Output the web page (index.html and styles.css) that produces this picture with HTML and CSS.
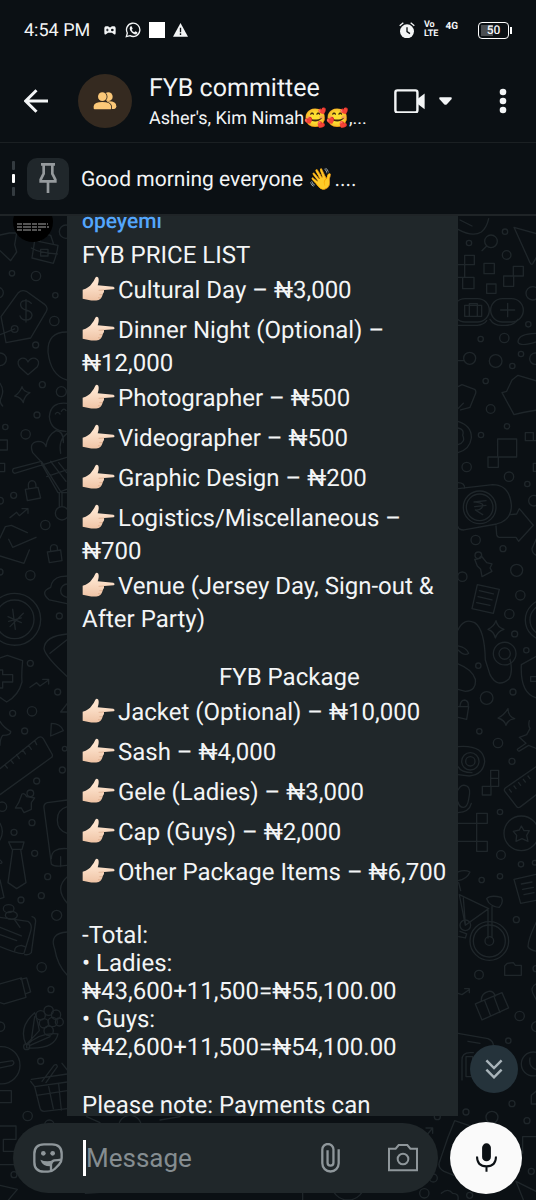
FILE: index.html
```
<!DOCTYPE html>
<html lang="en">
<head>
  <meta charset="UTF-8" />
  <meta name="viewport" content="width=device-width, initial-scale=1" />
  <title>FYB committee</title>
  <link rel="stylesheet" href="styles.css">
</head>
<body>
  <svg class="wallpaper" viewBox="0 0 536 1200" preserveAspectRatio="xMidYMin slice" aria-hidden="true">
    <!-- pointing hand, used by the list -->
    <defs>
      <linearGradient id="skin" x1="0" y1="0" x2="0" y2="1">
        <stop offset="0.3" stop-color="#fde3cd"/>
        <stop offset="1" stop-color="#efc4a6"/>
      </linearGradient>
      <symbol id="hand" viewBox="0 0 108 120">
        <path fill="url(#skin)" stroke="none" d="M2 62Q21 56 29 44 37 34 40 26 44 20 49 26 52 34 47 49L94 53Q101 57 95 61L66 63Q68 70 62 76 60 88 50 93 36 96 20 93L2 89z"/>
        <path fill="none" stroke="#d9a684" stroke-width="2" d="M66 63L50 64M62 77l-10 0M57 87l-9-1"/>
      </symbol>
    </defs>
    <!-- upper left -->
    <g transform="translate(0 220) scale(.3333)">
      <path d="M0 45l28-6 22 0-6 35 6 22-18 26-32-30M104 62l70 14q-2 22-14 54l-64-16zM94 84q22 14 78 18M122 88h22v20h-22zM120 64q6-26 32-18l8 24"/>
      <circle cx="198" cy="35" r="20"/><circle cx="36" cy="160" r="8"/><circle cx="108" cy="168" r="14"/><circle cx="166" cy="226" r="8"/>
      <circle cx="163" cy="303" r="14"/><circle cx="107" cy="375" r="9"/><circle cx="-6" cy="218" r="16"/><circle cx="0" cy="418" r="19"/>
      <path d="M18 368L3 290 55 218q10-10 24-4l56 40q10 8 4 20L92 354zM0 344l44-17"/><circle cx="44" cy="327" r="10"/>
      <path d="M94 250q-8-10-20-8-14 2-12 14 2 10 16 14 18 4 18 16-2 14-18 14-14 0-18-12M78 238v68"/>
      <path d="M200 336q-58 0-56 60 8 70 56 84M84 464l-26-24q-10-18 6-25 14-3 20 11 8-14 22-11 16 8 6 25z"/>
      <path d="M66 500q4 16 24 18-18 10-20 30-6-16-26-20 16-10 22-28z"/>
      <circle cx="127" cy="494" r="9"/><circle cx="184" cy="515" r="15"/><circle cx="111" cy="585" r="9"/><circle cx="77" cy="643" r="14"/><circle cx="16" cy="621" r="8"/>
      <path d="M0 490q14 20 4 42-8 14 4 26M202 550q-50-6-54 40 4 44 50 44M166 582q6-10 14 0M184 574q8-12 14-2"/>
      <path d="M126 728l-28-30q-12-30 16-34 20 0 24 16 4-34 30-48 24 2 22 36M182 700q-8-40 20-60"/>
      <path d="M200 712l-156 48q-10-4-4-14l84-22 60 94h16M124 730l50 88 26-10M152 724l46 60M140 770l60-20M176 728l24 30M178 818v44M186 818v40"/>
      <circle cx="186" cy="880" r="20"/><path d="M0 660h22v30H0M0 730h14v25H0M76 808l38-6 8 32-40 8zM86 804q-4-20 10-22 12 0 12 18"/>
      <circle cx="41" cy="826" r="9"/><circle cx="0" cy="842" r="10"/><circle cx="136" cy="915" r="14"/><path d="M30 893l20-16 8 10 24-20M66 866h18v14"/>
      <path d="M82 938l-48-22-18 4-16 34M26 958l12 24 70-30M88 990l-16 40-72-22"/>
      <path d="M142 996l40-6 4 32-38 6zM152 994q-4-20 10-20 12 0 10 16"/><circle cx="91" cy="1066" r="14"/><circle cx="0" cy="1056" r="9"/>
      <path d="M204 1152l-56-12q-30-24 4-38 4-26 30-32l22-2"/><circle cx="202" cy="1112" r="20"/>
      <circle cx="44" cy="1198" r="78"/><circle cx="44" cy="1198" r="58"/><path d="M38 1168l8 60M70 1180l-40 40M24 1190l40 18M26 1204l38-10"/><circle cx="178" cy="1188" r="9"/>
    </g>
    <!-- lower left -->
    <g transform="translate(0 640) scale(.3333)">
      <path d="M132 26q2-38 70-44M132 26q4 24 70 84M150 40l50-40M0 54l22-8 46 16q-4 40-2 64-10 40-46 60L0 172M0 90h8v14h30v22H8v18H0"/>
      <circle cx="91" cy="70" r="9"/><circle cx="173" cy="156" r="9"/><circle cx="96" cy="214" r="14"/><circle cx="38" cy="220" r="9"/><circle cx="74" cy="273" r="9"/>
      <path d="M90 142l20-14 10 10 26-18M128 118h18v14M154 250q28 0 36 22l-38 16zM202 190l-20 26h20M0 244q10 18 32 30 2 12-24 12-8 10-8 30"/>
      <path d="M0 386l116-94q8-4 14 4l26 46q4 8-4 12L0 464M14 374l8 10M32 360l8 10M50 344l8 12M68 330l8 12M86 316l8 12M104 302l6 12"/>
      <circle cx="187" cy="390" r="9"/><circle cx="194" cy="326" r="7"/><circle cx="110" cy="423" r="9"/><circle cx="6" cy="500" r="14"/><circle cx="96" cy="548" r="9"/><circle cx="42" cy="577" r="9"/><circle cx="104" cy="640" r="9"/><circle cx="143" cy="710" r="9"/>
      <path d="M66 462q8-4 14 8l24 4-10 14 0 20-22 10-8-14-18 0 10-16z"/><circle cx="91" cy="460" r="10"/>
      <path d="M202 480l-60 8q-12 4-10 16l22 168q8 10 46 4M202 500q-30 8-30 40t30 40M154 656q0-34 48-30M182 650v30M26 606h46l-6 22H36zM38 628h24l16 100-28 18-26-18zM0 550q14 24 0 50M0 660q12 10 0 10M0 720l12 52-12 4"/>
      <circle cx="63" cy="780" r="9"/><circle cx="124" cy="767" r="9"/><circle cx="170" cy="826" r="15"/><path d="M202 710q-40 34 0 80"/>
      <path d="M0 832l84 12q14 8 8 30l-20 66q-10 6-72-20M96 830q14 4 10 20l-12 88q-6 8-20 6M0 862l64 26M0 884l50 18M44 932q0-14 20-16l10 4"/><ellipse cx="26" cy="806" rx="16" ry="12"/><ellipse cx="34" cy="826" rx="18" ry="12"/><path d="M44 840l16 22"/>
      <circle cx="125" cy="982" r="14"/><circle cx="153" cy="1049" r="9"/><path d="M202 876q-56 4-38 50 8 50 38 80M0 1032l64-18 14 58-66 20-12-4M62 1018l18-4 12 42-16 6"/>
      <circle cx="0" cy="1160" r="14"/><circle cx="4" cy="1276" r="56"/><path d="M0 1268l38-6q8 8-2 14L0 1284"/><circle cx="122" cy="1264" r="9"/>
      <path d="M78 1214q-24-52 26-96 10 26 14 54-18 20-40 42zM80 1216q40-40 94-34-10 48-94 42zM104 1130l-10 70M150 1190l-60 26"/><circle cx="122" cy="1126" r="14"/><circle cx="146" cy="1112" r="14"/><circle cx="168" cy="1124" r="14"/><circle cx="132" cy="1150" r="14"/><circle cx="158" cy="1146" r="14"/><circle cx="178" cy="1146" r="12"/><circle cx="146" cy="1172" r="14"/><circle cx="80" cy="1220" r="9"/>
    </g>
    <!-- upper right -->
    <g transform="translate(440 220) scale(.3333)">
      <path d="M54 28q44 24 70 8 16-12 22-40M60 0l36 18M222 22l48 106q6 10 10 0l14-24M222 22l72 20"/>
      <circle cx="153" cy="64" r="19"/><path d="M140 78l-14 14"/><circle cx="195" cy="35" r="8"/><circle cx="87" cy="69" r="8"/><circle cx="200" cy="105" r="13"/><circle cx="278" cy="220" r="20"/>
      <path d="M74 106h29v28H74zM54 134h20v38H54M68 172h34v34H68zM132 130h31v31h-31zM220 139h30v29h-30zM191 168h30v31h-30zM140 192h28v28h-28z"/>
      <rect x="40" y="236" width="108" height="70" rx="35"/><rect x="152" y="236" width="98" height="70" rx="35"/><path d="M54 316h58q20-2 28-14M150 298q12 20 40 18 30 2 44-18M74 256h51v33H74zM88 289v-38h24v38M182 270h42M203 250v40"/>
      <circle cx="265" cy="313" r="8"/><circle cx="122" cy="357" r="8"/><circle cx="193" cy="354" r="14"/><circle cx="89" cy="415" r="18"/><path d="M54 422h18M294 340q-60 0-60 26 6 16 60-2"/><circle cx="167" cy="423" r="19"/><circle cx="217" cy="438" r="8"/><circle cx="243" cy="402" r="8"/><circle cx="286" cy="416" r="17"/><circle cx="137" cy="483" r="8"/>
      <path d="M54 500l12-6 38 14q6 6 2 14l-16 40-28 8M54 566l16-16M294 484l-60-18-18 14-16 34-14 4 36 66q30-8 72-14"/><circle cx="152" cy="567" r="13"/><circle cx="201" cy="619" r="8"/><circle cx="123" cy="645" r="8"/><circle cx="80" cy="741" r="14"/>
      <path d="M54 604q42 14 40 50-4 34-40 44M54 624q20 4 14 22 10 20-14 28M173 657h57v54h-57zM144 711h31v31h-31zM256 638h24v24h-24zM280 662h14M280 730h14v24h-14z"/>
      <circle cx="207" cy="770" r="14"/><circle cx="262" cy="792" r="8"/><circle cx="282" cy="842" r="16"/><path d="M54 806l104-12q50 0 56 60 2 46-44 58l-98 18q-16 0-18-10M54 788q20 0 20 16"/><circle cx="119" cy="862" r="49"/><circle cx="119" cy="862" r="40"/><path d="M102 846l36-4M104 860l34-4M108 846q28 4 18 16-6 10-20 8l22 14"/>
      <path d="M168 918l2 26q2 8 8 8h50l8 12 44-48-42-50-8 16-18 2"/><circle cx="107" cy="960" r="14"/><circle cx="189" cy="986" r="9"/><circle cx="230" cy="1051" r="18"/><circle cx="67" cy="1070" r="14"/><path d="M294 946l-18 40q0 16 18 22M104 1018q12 2 20-10l16 20 16 4-6 12 6 10-30 16-4-22-10-10z"/><circle cx="115" cy="1006" r="10"/>
      <path d="M112 1094l66 14-18 72-64-14zM118 1112l42 10M114 1130l42 10M110 1148l40 8M168 1202q4 20 24 26-20 6-26 26-4-20-22-26 18-8 24-26z"/><circle cx="241" cy="1126" r="14"/><circle cx="208" cy="1182" r="14"/><circle cx="224" cy="1242" r="9"/><circle cx="259" cy="1291" r="8"/>
      <circle cx="318" cy="1200" r="62"/><circle cx="318" cy="1200" r="48"/><circle cx="194" cy="1301" r="34"/><circle cx="194" cy="1301" r="17"/><path d="M54 1230q18-38 50-22 30 20 32 112l14 44q22 42 56 14 14-20 4-60M54 1278q24 4 32 22-12 10-32-10"/>
    </g>
    <!-- lower right -->
    <g transform="translate(440 640) scale(.3333)">
      <circle cx="115" cy="77" r="8"/><circle cx="219" cy="156" r="9"/><circle cx="140" cy="174" r="19"/><circle cx="118" cy="274" r="8"/><circle cx="174" cy="309" r="14"/><circle cx="216" cy="364" r="9"/>
      <path d="M54 72q42 16 52 46 4 34-30 36l-22-6M294 46l-50 28q-4 90 48 100M294 110h-22v14h22M54 200h32l-6 38-26-6M60 198q2-18 14-18 14 4 10 20M204 206q0 22 20 30-20 2-26 20-4-16-24-22 18-8 30-28zM268 242q-4 14 2 24l-10 18-22 8 20 18-26 18q2 8 8 4l26-16 24 10"/>
      <path d="M54 320q76-6 80 44-4 40-46 44l-34-4M54 380q10 18 42 18"/><circle cx="91" cy="364" r="26"/><circle cx="91" cy="364" r="14"/><path d="M54 450q10-20 26-12 14 6 6 40-4 24-16 24t-16-16M54 518q34-2 40-28M152 391h24v24h-24zM152 415h24v24h-24zM127 439h26v26h-26z"/>
      <path d="M294 376l-98 68q-6 6 0 12l34 44q4 6 12 0l52-40M208 448l6 8M222 438l6 8M236 428l6 8M250 418l6 8M264 408l6 8"/><circle cx="180" cy="516" r="8"/>
      <path d="M110 520h32v30h-32zM54 550h56v54H54M110 604h32v30h-32z"/><circle cx="244" cy="580" r="52"/><path d="M244 558l8 14 16 0-8 14 4 18-18-8-18 8 2-18-10-12 18-4z"/><circle cx="183" cy="645" r="13"/><circle cx="243" cy="673" r="8"/><circle cx="284" cy="668" r="7"/><circle cx="125" cy="720" r="8"/><circle cx="180" cy="709" r="8"/>
      <path d="M294 702l-72 16 20 72 52-10M244 732l32-6M248 748l32-6M252 764l30-6M54 696q20-8 36 0-10 22-36 26M56 728l6 24M58 764l88 42-70 50zM70 774l6 78M140 776q10-12 44-4 8 16-6 30-18 0-32-14zM144 806v88M156 800v92"/>
      <circle cx="148" cy="903" r="58"/><circle cx="148" cy="903" r="48"/><circle cx="148" cy="903" r="13"/><circle cx="76" cy="856" r="16"/><path d="M60 874l20 8-4 12-20-4"/>
      <circle cx="229" cy="839" r="9"/><circle cx="117" cy="1004" r="13"/><circle cx="239" cy="1128" r="14"/><circle cx="205" cy="1202" r="8"/><circle cx="288" cy="986" r="9"/><circle cx="290" cy="1160" r="15"/>
      <path d="M294 836q-30 60-30 84 6 12 30 14M194 978l8-8 18-2 6 8h18v30h-50zM54 1060l12 4 20-14M74 1046h14v12M106 1092l80-34 20 46-80 36zM124 1084q-2-24 22-30 14-2 20 14M134 1082l18 46M162 1070l18 48M294 1030q-30 10-10 40l10 20"/>
      <path d="M54 1180l90 16q18 8 16 24M84 1204l36 6M66 1320v-60q0-22 24-22h10M78 1250h20v60H78z"/><circle cx="280" cy="1272" r="36"/><path d="M270 1254q-6 30 24 36"/>
    </g>
    <!-- behind the message box -->
    <g transform="translate(0 1020) scale(.3333)">
      <path d="M94 178l108-16M92 184l12 16 98-14M104 200l16 64q2 10 12 10l70-8M126 184l36-48q8-6 10 4l-34 48M186 130l16 20M146 200l14 66M176 192l8 78M110 226l92-14M0 212h34v36H0M0 318h48v40H10v36h38v40H0M0 496l52 12-30 36M256 520l90-6"/>
      <circle cx="83" cy="288" r="14"/><circle cx="148" cy="314" r="14"/><circle cx="42" cy="464" r="9"/><circle cx="390" cy="320" r="34"/><path d="M260 290l40 18M480 300l60-10"/>
    </g>
    <g transform="translate(268 1020) scale(.3333)">
      <path d="M304 174q34 8 26 30-10 20-26 12M304 236l36 10q24 0 36-40M540 352l20-50 60 20M540 352l-24 70q-10 20 12 32l30 12M474 324h20v16M494 324l-20 24-10-12M764 350h40M764 350v50M744 484l60 30M744 484l24 60M520 520q20-18 34 0 20 0 16 20M104 518v22"/>
      <circle cx="594" cy="276" r="9"/><circle cx="672" cy="292" r="18"/><circle cx="732" cy="251" r="9"/><circle cx="777" cy="302" r="9"/><circle cx="790" cy="454" r="9"/><circle cx="469" cy="520" r="14"/><circle cx="496" cy="474" r="12"/><circle cx="605" cy="526" r="9"/><circle cx="240" cy="490" r="50"/><circle cx="508" cy="290" r="9"/><path d="M804 214l-14 12v26h14"/>
    </g>
  </svg>

  <div class="app">
    <div class="status-bar">
      <span class="time">4:54 PM</span>
      <svg class="game" viewBox="0 0 36 27"><path fill="currentColor" d="M5 1h8l2 3h6l2-3h8q3 0 4 5v15q0 6-5 4l-6-5H12l-6 5q-5 2-5-4V6q1-5 4-5z"/><path stroke="#0b1014" stroke-width="2.5" d="M6 12h8M10 8v8"/><circle cx="25" cy="12" r="4" fill="#0b1014"/></svg>
      <svg class="wa" viewBox="0 0 48 48" fill="none" stroke="currentColor"><path stroke-width="4" d="M4 44l3-11a20 20 0 1 1 8 8z"/><path fill="currentColor" stroke="none" d="M17 13h3l3 7-3 3q3 6 8 8l3-3 6 3q1 5-4 6-5 1-12-5-7-7-7-12 0-5 3-7z"/></svg>
      <span class="block"></span>
      <svg class="warn" viewBox="0 0 44 40"><path fill="currentColor" d="M22 0l22 40H0z"/><path stroke="#0b1014" stroke-width="4" d="M22 14v13M22 30v5"/></svg>
      <svg class="alarm" viewBox="0 0 48 50"><circle cx="24" cy="28" r="21" fill="currentColor"/><path fill="none" stroke="currentColor" stroke-width="4" d="M2 11l11-9M46 11L35 2"/><path fill="none" stroke="#0b1014" stroke-width="4" d="M24 16v13l9 6"/></svg>
      <span class="volte">Vo<br>LTE</span>
      <span class="net">4G</span>
      <span class="battery">50</span>
    </div>

    <header class="top-bar">
      <button class="icon-btn back" aria-label="Back"><svg viewBox="0 0 24 24"><path d="M24 12H2M12.500 1.200L1.700 12l10.800 10.800"/></svg></button>
      <div class="group-avatar">
        <svg viewBox="0 0 72 54"><circle cx="46" cy="14" r="13"/><path d="M42 28q28-2 28 15 0 8-6 8H42z"/><g stroke="#352a20" stroke-width="5" paint-order="stroke"><circle cx="28" cy="14" r="13"/><path d="M2 42q2-12 26-12t26 12v8q0 2-3 2H5q-3 0-3-3z"/></g></svg>
      </div>
      <div class="titles">
        <h1>FYB committee</h1>
        <p>Asher's, Kim Nimah<span class="emoji">🥰🥰</span>,...</p>
      </div>
      <button class="icon-btn call" aria-label="Video call">
        <svg class="cam" viewBox="0 0 90 72"><rect x="4" y="4" width="64" height="64" rx="6"/><path class="solid" d="M68 29L89 13v46L68 43z"/></svg>
        <svg class="caret-down" viewBox="0 0 38 24"><path d="M2 1h34q3 4-1 7L23 21q-4 4-8 0L3 8q-4-3-1-7z"/></svg>
      </button>
      <button class="icon-btn more" aria-label="More options"><svg viewBox="0 0 8 26"><circle cx="4" cy="4" r="3.300"/><circle cx="4" cy="13" r="3.300"/><circle cx="4" cy="22" r="3.300"/></svg></button>
    </header>

    <div class="pinned">
      <div class="steps"><i></i><i class="on"></i><i></i></div>
      <div class="pin-tile"><svg viewBox="0 0 54 92"><path d="M6 4h42M14 4v28L5 50v5h44v-5L40 32V4M27 55v35"/></svg></div>
      <p>Good morning everyone <span class="emoji">👋</span>....</p>
    </div>

    <main class="chat">
      <div class="sender-avatar"><svg viewBox="0 0 40 40"><path d="M4 22h31M4 25h32M4 28h24"/></svg></div>
      <article class="bubble">
        <a class="sender" href="#">opeyemi</a>
        <p>FYB PRICE LIST</p>
        <p><svg class="hand" role="img" aria-label="👉🏻"><use href="#hand"/></svg>Cultural Day – ₦3,000</p>
        <p><svg class="hand" role="img" aria-label="👉🏻"><use href="#hand"/></svg>Dinner Night (Optional) – ₦12,000</p>
        <p><svg class="hand" role="img" aria-label="👉🏻"><use href="#hand"/></svg>Photographer – ₦500</p>
        <p><svg class="hand" role="img" aria-label="👉🏻"><use href="#hand"/></svg>Videographer – ₦500</p>
        <p><svg class="hand" role="img" aria-label="👉🏻"><use href="#hand"/></svg>Graphic Design – ₦200</p>
        <p><svg class="hand" role="img" aria-label="👉🏻"><use href="#hand"/></svg>Logistics/Miscellaneous – ₦700</p>
        <p><svg class="hand" role="img" aria-label="👉🏻"><use href="#hand"/></svg>Venue (Jersey Day, Sign-out &amp; After Party)</p>
        <p class="package">FYB Package</p>
        <p><svg class="hand" role="img" aria-label="👉🏻"><use href="#hand"/></svg>Jacket (Optional) – ₦10,000</p>
        <p><svg class="hand" role="img" aria-label="👉🏻"><use href="#hand"/></svg>Sash – ₦4,000</p>
        <p><svg class="hand" role="img" aria-label="👉🏻"><use href="#hand"/></svg>Gele (Ladies) – ₦3,000</p>
        <p><svg class="hand" role="img" aria-label="👉🏻"><use href="#hand"/></svg>Cap (Guys) – ₦2,000</p>
        <p><svg class="hand" role="img" aria-label="👉🏻"><use href="#hand"/></svg>Other Package Items – ₦6,700</p>
        <p class="gap">-Total:</p>
        <p>• Ladies:<br>₦43,600+11,500=₦55,100.00</p>
        <p>• Guys:<br>₦42,600+11,500=₦54,100.00</p>
        <p class="gap">Please note: Payments can</p>
      </article>
      <button class="to-bottom" aria-label="Scroll to bottom"><svg viewBox="0 0 52 58"><path d="M4 4l22 22L48 4M4 31l22 22 22-22"/></svg></button>
    </main>

    <form class="composer">
      <div class="field">
        <button type="button" class="icon-btn" aria-label="Stickers">
          <svg class="sticker" viewBox="0 0 90 90"><path d="M33 4h24q29 0 29 29v12q0 12-8 20L65 78q-8 8-20 8H33Q4 86 4 57V33Q4 4 33 4z"/><path d="M84 50q-8 2-20 2-8 2-10 12v20"/><path class="solid" d="M22 50q18 8 38 2-8 6-8 18-24 0-30-20z"/><circle class="solid" cx="31" cy="31" r="7"/><circle class="solid" cx="59" cy="31" r="7"/></svg>
        </button>
        <span class="text-caret"></span>
        <input type="text" placeholder="Message" aria-label="Message">
        <button type="button" class="icon-btn" aria-label="Attach">
          <svg class="clip" viewBox="0 0 58 90"><path d="M54 19v43a25 25 0 0 1-50 0V20a17 17 0 0 1 34 0v40a9 9 0 0 1-18 0V22"/></svg>
        </button>
        <button type="button" class="icon-btn" aria-label="Camera">
          <svg class="photo" viewBox="0 0 90 82"><path d="M3 14h20l9-11h26l9 11h20v65H3z"/><circle cx="45" cy="45" r="16"/></svg>
        </button>
      </div>
      <button type="button" class="mic" aria-label="Voice message">
        <svg viewBox="0 0 62 86"><rect x="18" y="1" width="26" height="53" rx="13"/><path d="M3 40q0 29 28 29t28-29M31 69v16"/></svg>
      </button>
    </form>
  </div>
</body>
</html>
```
FILE: styles.css
```
* {
  box-sizing: border-box;
}
body {
  margin: 0;
  background: #0b1014;
  color: #f3f5f6;
  font-family: Roboto, "Liberation Sans", sans-serif;
  text-rendering: geometricPrecision;
}
h1, p {
  margin: 0;
  font-weight: 400;
}
svg {
  display: block;
  flex: none;
}
button {
  border: 0;
  padding: 0;
  background: none;
  color: inherit;
  font: inherit;
}
.wallpaper {
  position: absolute;
  top: 0;
  left: 0;
  width: 100%;
  height: 100%;
  fill: none;
  stroke: #1f262a;
  stroke-width: 4;
  stroke-linejoin: round;
  stroke-linecap: round;
}
.app {
  position: relative;
  display: flex;
  flex-direction: column;
  height: 100vh;
}

/* status bar */
.status-bar {
  display: flex;
  align-items: center;
  height: 60px;
  padding: 0 27px 0 24px;
  background: #0b1014;
}
.time {
  margin-right: 14px;
  font-size: 18px;
}
.game { width: 12px; margin-right: 9px; }
.wa { width: 16px; margin-right: 8px; }
.block {
  width: 16px;
  height: 16px;
  margin-right: 8px;
  background: #fff;
}
.warn { width: 15px; }
.alarm { width: 16px; margin-left: auto; }
.volte {
  margin-left: 9px;
  font-size: 9px;
  font-weight: 700;
  line-height: 9px;
}
.net {
  margin: 0 20px 8px 7px;
  font-size: 10px;
  font-weight: 700;
}
.battery {
  position: relative;
  width: 31px;
  height: 17px;
  border: 1px solid #fff;
  border-radius: 4px;
  background: linear-gradient(#4a4d50, #4a4d50) 2px 2px / 12px 11px no-repeat;
  font-size: 12px;
  font-weight: 500;
  line-height: 15px;
  text-align: center;
}
.battery::after {
  content: "";
  position: absolute;
  top: 4px;
  right: -4px;
  width: 2px;
  height: 7px;
  background: #fff;
}

/* top bar */
.top-bar {
  display: flex;
  align-items: center;
  height: 83px;
  padding: 0 29px 0 24px;
  border-bottom: 1px solid #1b2023;
  background: #0b1014;
}
.icon-btn svg {
  fill: none;
  stroke: currentColor;
}
.icon-btn .solid {
  fill: currentColor;
  stroke: none;
}
.back svg {
  width: 24px;
  stroke-width: 3;
}
.group-avatar {
  display: flex;
  align-items: center;
  justify-content: center;
  width: 54px;
  height: 54px;
  margin: 0 17px 0 30px;
  border-radius: 50%;
  background: #352a20;
}
.group-avatar svg {
  width: 24px;
  fill: #fbc878;
}
.titles {
  flex: 1;
  min-width: 0;
  padding-top: 3px;
  white-space: nowrap;
}
.titles h1 {
  font-size: 25px;
  line-height: 32px;
}
.titles p {
  font-size: 18px;
  line-height: 28px;
}
.call {
  display: flex;
  align-items: center;
  gap: 14px;
  margin-right: 47px;
}
.icon-btn .cam {
  width: 31px;
  stroke-width: 7;
}
.call .caret-down {
  width: 13px;
  fill: currentColor;
  stroke: none;
}
.more svg {
  width: 8px;
  fill: currentColor;
  stroke: none;
}

/* pinned message */
.pinned {
  display: flex;
  align-items: center;
  height: 73px;
  padding-left: 12px;
  border-bottom: 2px solid #1f2427;
  background: #0b1014;
}
.steps {
  display: flex;
  flex-direction: column;
  gap: 4px;
  margin-right: 12px;
}
.steps i {
  width: 3px;
  height: 9px;
  border-radius: 1px;
  background: #343b40;
}
.steps .on {
  background: #fff;
}
.pin-tile {
  display: flex;
  align-items: center;
  justify-content: center;
  width: 42px;
  height: 42px;
  margin-right: 12px;
  border-radius: 10px;
  background: #20272b;
}
.pin-tile svg {
  width: 18px;
  fill: none;
  stroke: #969b9e;
  stroke-width: 8;
}
.pinned p {
  padding-top: 2px;
  font-size: 21px;
  line-height: 28px;
}

/* conversation */
.chat {
  position: relative;
  display: flex;
  flex: 1;
  align-items: flex-start;
  min-height: 0;
  overflow: hidden;
}
.sender-avatar {
  width: 40px;
  height: 40px;
  margin: -14px 14px 0 13px;
  border-radius: 50%;
  background: #000;
}
.sender-avatar svg {
  fill: none;
  stroke: #a8a8a8;
  stroke-width: 1;
  stroke-dasharray: 5 1 8 1;
}
.bubble {
  flex: 1;
  margin: -16px 78px 0 0;
  padding: 8px 10px 24px 15px;
  background: #20272a;
  font-size: 24px;
  line-height: 28px;
}
.sender {
  display: block;
  margin-bottom: 5px;
  color: #53a6fd;
  font-size: 21px;
  font-weight: 500;
  text-decoration: none;
}
.hand {
  display: inline-block;
  width: 36px;
  height: 40px;
  vertical-align: -11px;
}
.package {
  margin-top: 30px;
  padding-left: 137px;
}
.gap {
  margin-top: 30px;
}
.to-bottom {
  position: absolute;
  right: 18px;
  bottom: 23px;
  display: flex;
  align-items: center;
  justify-content: center;
  width: 48px;
  height: 48px;
  border-radius: 50%;
  background: #25333b;
}
.to-bottom svg {
  width: 18px;
  fill: none;
  stroke: #a9b4ba;
  stroke-width: 7;
}

/* message box */
.composer {
  display: flex;
  align-items: center;
  gap: 12px;
  height: 84px;
  padding: 0 14px 0 13px;
}
.field {
  display: flex;
  flex: 1;
  align-items: center;
  min-width: 0;
  height: 70px;
  padding: 0 20px;
  border-radius: 35px;
  background: #20272a;
  color: #8f979b;
}
.sticker {
  width: 30px;
  stroke-width: 7;
}
.text-caret {
  width: 3px;
  height: 36px;
  margin-left: 20px;
  background: #fff;
}
.field input {
  flex: 1;
  min-width: 0;
  padding: 0;
  border: 0;
  outline: 0;
  background: none;
  color: #f3f5f6;
  font: inherit;
  font-size: 26px;
}
.field input::placeholder {
  color: #858d91;
  opacity: 1;
}
.clip {
  width: 19px;
  margin-right: 48px;
  stroke-width: 7;
}
.photo {
  width: 30px;
  stroke-width: 6;
}
.mic {
  display: flex;
  align-items: center;
  justify-content: center;
  width: 72px;
  height: 72px;
  border-radius: 50%;
  background: #fafafa;
}
.mic svg {
  width: 21px;
  fill: #0b1014;
}
.mic path {
  fill: none;
  stroke: #0b1014;
  stroke-width: 6;
}
```
